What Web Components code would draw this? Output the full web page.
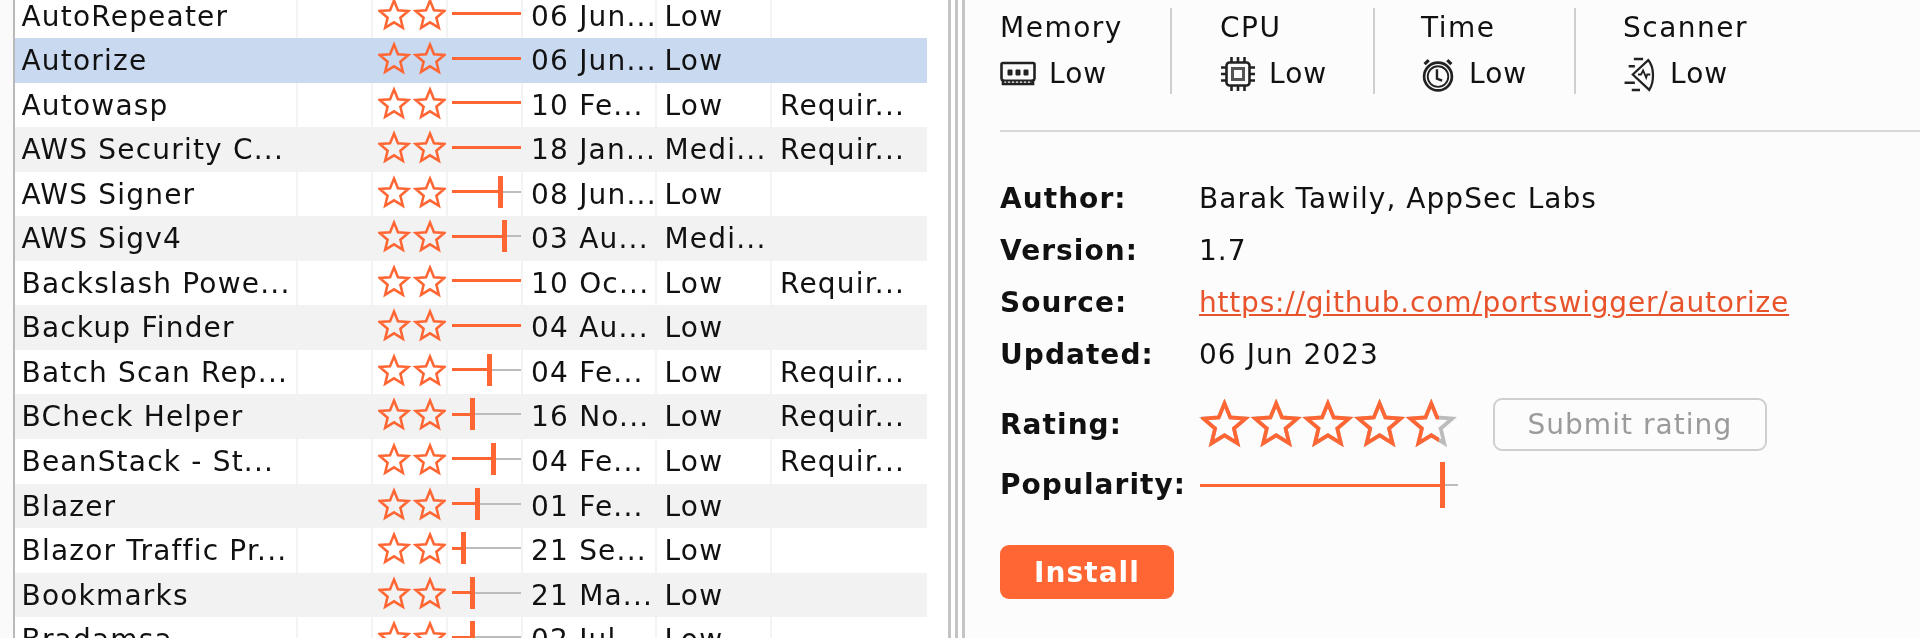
<!DOCTYPE html>
<html>
<head>
<meta charset="utf-8">
<title>BApp Store</title>
<style>
  html, body { margin: 0; height: 100%; overflow: hidden; background: #fff; }
  body { font: 28px/1.2 "DejaVu Sans", sans-serif; letter-spacing: 1.2px; color: #111; }
</style>
</head>
<body>
<bapp-store></bapp-store>

<script>
const ORANGE = '#ff6633';
const GREY = '#bcbcbc';

// builds the outline of a five pointed star, in a 100x100 box
function starPoints() {
  const pts = [];
  for (let i = 0; i < 10; i++) {
    const r = i % 2 ? 21 : 47;
    const a = -Math.PI / 2 + i * Math.PI / 5;
    pts.push((50 + r * Math.cos(a)).toFixed(1) + ',' + (52 + r * Math.sin(a)).toFixed(1));
  }
  return pts.join(' ');
}

let clipCount = 0;

/**
 * <star-rating count="2" size="32" step="36" stroke="9" value="238">
 * Row of outlined stars, orange up to value (px), grey after it.
 */
class StarRating extends HTMLElement {
  connectedCallback() {
    const count = +this.getAttribute('count') || 5;
    const size = +this.getAttribute('size') || 32;
    const step = +this.getAttribute('step') || size;
    const stroke = this.getAttribute('stroke') || 8;
    const width = step * (count - 1) + size;
    const value = this.hasAttribute('value') ? +this.getAttribute('value') : width;
    const scale = size / 100;
    const id = 'clip' + (clipCount++);
    const points = starPoints();
    let stars = '';
    for (let i = 0; i < count; i++) {
      stars += `<g transform="translate(${i * step} 0) scale(${scale})"><polygon points="${points}" stroke-width="${stroke}"/></g>`;
    }
    const root = this.attachShadow({ mode: 'open' });
    root.innerHTML = `
      <style>
        :host { display: block; width: ${width}px; height: ${size}px; }
        svg { display: block; overflow: visible; }
        g { fill: none; }
      </style>
      <svg width="${width}" height="${size}" viewBox="0 0 ${width} ${size}">
        <defs><clipPath id="${id}"><rect x="0" y="-2" width="${value}" height="${size + 4}"/></clipPath></defs>
        ${value < width ? `<g stroke="${GREY}">${stars}</g>` : ''}
        <g stroke="${ORANGE}" clip-path="url(#${id})">${stars}</g>
      </svg>`;
  }
}
customElements.define('star-rating', StarRating);

/**
 * <pop-bar value="48" thick="3" tick="32">
 * Popularity line: orange up to value (px), a tick there, grey after.
 */
class PopBar extends HTMLElement {
  connectedCallback() {
    const value = +this.getAttribute('value');
    const thick = +this.getAttribute('thick') || 3;
    const tick = +this.getAttribute('tick') || 32;
    const tickW = +this.getAttribute('tick-width') || 5;
    const full = this.hasAttribute('full');
    const root = this.attachShadow({ mode: 'open' });
    root.innerHTML = `
      <style>
        :host { display: flex; align-items: center; height: ${tick}px; }
        .on { width: ${value}px; height: ${thick}px; background: ${ORANGE}; }
        .tick { width: ${tickW}px; height: ${tick}px; background: ${ORANGE}; margin-left: -1px; }
        .off { flex: 1; height: 2px; background: ${GREY}; }
      </style>
      <div class="on"></div>
      ${full ? '' : '<div class="tick"></div><div class="off"></div>'}`;
  }
}
customElements.define('pop-bar', PopBar);

/**
 * <bapp-row name="" pop="" date="" cost="" pro="" stripe selected>
 * One row of the extension table.
 */
class BappRow extends HTMLElement {
  connectedCallback() {
    const a = n => this.getAttribute(n) || '';
    const pop = a('pop');
    const root = this.attachShadow({ mode: 'open' });
    root.innerHTML = `
      <style>
        :host {
          display: grid;
          grid-template-columns: 283px 75px 75px 75px 134px 115px 153px;
          height: 44.55px;
          background: #fff;
          --line: #f3f3f3;
        }
        :host([stripe]) { background: #f2f2f2; --line: #f2f2f2; }
        :host([selected]) { background: #c9d9f0; --line: #c9d9f0; }
        .cell {
          box-sizing: border-box;
          height: 100%;
          padding-left: 6.5px;
          line-height: 45px;
          white-space: nowrap;
          overflow: hidden;
          border-right: 2px solid var(--line);
        }
        .cell:last-child { border-right: 0; }
        .stars { padding: 5px 0 0 5px; }
        .pop { padding: 4px 0 0 4px; }
        .pop pop-bar { width: 72px; }
        .date { padding-left: 8px; }
        .cost { padding-left: 7.5px; }
        .pro { padding-left: 8px; }
      </style>
      <div class="cell">${a('name')}</div>
      <div class="cell"></div>
      <div class="cell stars"><star-rating count="2" size="32" step="36" stroke="8"></star-rating></div>
      <div class="cell pop"><pop-bar value="${pop || 72}" ${pop ? '' : 'full'}></pop-bar></div>
      <div class="cell date">${a('date')}</div>
      <div class="cell cost">${a('cost')}</div>
      <div class="cell pro">${a('pro')}</div>`;
  }
}
customElements.define('bapp-row', BappRow);

const ROWS = [
  ['AutoRepeater', '', '06 Jun...', 'Low', ''],
  ['Autorize', '', '06 Jun...', 'Low', ''],
  ['Autowasp', '', '10 Fe...', 'Low', 'Requir...'],
  ['AWS Security C...', '', '18 Jan...', 'Medi...', 'Requir...'],
  ['AWS Signer', 47, '08 Jun...', 'Low', ''],
  ['AWS Sigv4', 51, '03 Au...', 'Medi...', ''],
  ['Backslash Powe...', '', '10 Oc...', 'Low', 'Requir...'],
  ['Backup Finder', '', '04 Au...', 'Low', ''],
  ['Batch Scan Rep...', 36, '04 Fe...', 'Low', 'Requir...'],
  ['BCheck Helper', 19, '16 No...', 'Low', 'Requir...'],
  ['BeanStack - St...', 40, '04 Fe...', 'Low', 'Requir...'],
  ['Blazer', 24, '01 Fe...', 'Low', ''],
  ['Blazor Traffic Pr...', 10, '21 Se...', 'Low', ''],
  ['Bookmarks', 19, '21 Ma...', 'Low', ''],
  ['Bradamsa', 19, '02 Jul...', 'Low', '']
];

/** Left part: table of extensions, cut off by the window. */
class BappTable extends HTMLElement {
  connectedCallback() {
    const root = this.attachShadow({ mode: 'open' });
    root.innerHTML = `
      <style>
        :host {
          display: block;
          box-sizing: border-box;
          width: 948px;
          height: 638px;
          overflow: hidden;
          padding-left: 13px;
          background: linear-gradient(90deg, #fafafa 13px, #fff 13px);
        }
        .frame {
          margin-top: -6.5px;
          width: 912px;
          border-left: 2px solid #b9b9b9;
        }
      </style>
      <div class="frame"></div>`;
    const frame = root.querySelector('.frame');
    ROWS.forEach((r, i) => {
      const row = document.createElement('bapp-row');
      row.setAttribute('name', r[0]);
      if (r[1]) row.setAttribute('pop', r[1]);
      row.setAttribute('date', r[2]);
      row.setAttribute('cost', r[3]);
      row.setAttribute('pro', r[4]);
      if (i === 1) row.setAttribute('selected', '');
      else if (i % 2) row.setAttribute('stripe', '');
      frame.appendChild(row);
    });
  }
}
customElements.define('bapp-table', BappTable);

/** Triple grey bar between the two panes. */
class PaneSplit extends HTMLElement {
  constructor() {
    super();
    this.attachShadow({ mode: 'open' }).innerHTML = `
      <style>
        :host { display: flex; gap: 4px; width: 17px; height: 638px; flex: none; }
        i { width: 3px; background: #c4c4c4; }
      </style>
      <i></i><i></i><i></i>`;
  }
}
customElements.define('pane-split', PaneSplit);

/**
 * <resource-stat label="Memory" level="Low"><svg slot="icon">..</svg></resource-stat>
 */
class ResourceStat extends HTMLElement {
  connectedCallback() {
    const root = this.attachShadow({ mode: 'open' });
    root.innerHTML = `
      <style>
        :host { display: flex; flex-direction: column; justify-content: flex-start; }
        .label { height: 49px; line-height: 40px; letter-spacing: 1.5px; }
        .level { display: flex; align-items: center; height: 42px; }
        .icon { display: flex; width: var(--icon-w, 50px); flex: none; }
      </style>
      <div class="label">${this.getAttribute('label')}</div>
      <div class="level"><span class="icon"><slot name="icon"></slot></span><span>${this.getAttribute('level')}</span></div>`;
  }
}
customElements.define('resource-stat', ResourceStat);

/** <detail-row label="Author:">value</detail-row> */
class DetailRow extends HTMLElement {
  connectedCallback() {
    const root = this.attachShadow({ mode: 'open' });
    root.innerHTML = `
      <style>
        :host { display: flex; align-items: center; min-height: 52px; }
        .label { width: 199px; flex: none; font-weight: bold; }
      </style>
      <div class="label">${this.getAttribute('label')}</div>
      <slot></slot>`;
  }
}
customElements.define('detail-row', DetailRow);

/** <ui-button kind="primary">Install</ui-button> */
class UiButton extends HTMLElement {
  constructor() {
    super();
    this.attachShadow({ mode: 'open' }).innerHTML = `
      <style>
        :host {
          display: inline-flex;
          align-items: center;
          justify-content: center;
          box-sizing: border-box;
          border-radius: 9px;
        }
        :host([kind="primary"]) {
          width: 174px; height: 54px;
          background: ${ORANGE}; color: #fff; font-weight: bold;
        }
        :host([kind="disabled"]) {
          width: 274px; height: 53px;
          border: 2px solid #cfcfcf; color: #9b9b9b;
        }
      </style>
      <slot></slot>`;
  }
}
customElements.define('ui-button', UiButton);

/** Right part: details of the selected extension. */
class BappDetails extends HTMLElement {
  constructor() {
    super();
    this.attachShadow({ mode: 'open' }).innerHTML = `
      <style>
        :host {
          display: block;
          flex: 1;
          box-sizing: border-box;
          height: 638px;
          background: #fcfcfc;
          padding-left: 35px;
          overflow: hidden;
          letter-spacing: 1.05px;
        }
        .stats {
          display: flex;
          height: 130px;
          border-bottom: 2px solid #d8d8d8;
        }
        resource-stat { height: 86px; margin-top: 8px; }
        .s1 { width: 170px; }
        .s2 { width: 153px; padding-left: 48px; border-left: 2px solid #cfcfcf; }
        .s3 { width: 153px; padding-left: 46px; border-left: 2px solid #cfcfcf; }
        .s4 { padding-left: 47px; border-left: 2px solid #cfcfcf; }
        .info { padding-top: 41px; }
        a { color: #e8532b; text-decoration: underline; letter-spacing: 0.8px; }
        .rating { height: 58px; margin-top: 14.4px; }
        .pop { height: 62px; }
        .actions { margin-top: 30px; }
        star-rating { margin: 0 -2px 0 2px; }
        pop-bar { width: 258px; margin: 2px 0 0 1px; }
        svg { display: block; }
      </style>
      <div class="stats">
        <resource-stat class="s1" label="Memory" level="Low" style="--icon-w:49px">
          <svg slot="icon" width="36" height="26" viewBox="0 0 36 26" fill="none" stroke="#222" stroke-width="2.6">
            <path d="M3 2h30a1.5 1.5 0 0 1 1.500 1.500v14a2 2 0 0 1-1.500 2v3.500H3v-3.500a2 2 0 0 1-1.500-2v-14A1.500 1.500 0 0 1 3 2z"/>
            <path d="M3 19.500h30" stroke-width="2"/>
            <path d="M8 9h4v5H8zM16 9h4v5h-4zM24 9h4v5h-4z" fill="#222" stroke-width="1"/>
            <path d="M7 20v4M11 20v4M15 20v4M19 20v4M23 20v4M27 20v4M31 20v4" stroke-width="1.600"/>
          </svg>
        </resource-stat>
        <resource-stat class="s2" label="CPU" level="Low" style="--icon-w:49px">
          <svg slot="icon" width="36" height="36" viewBox="0 0 36 36" fill="none" stroke="#222" stroke-width="2.6">
            <rect x="6.500" y="6.500" width="23" height="23" rx="3"/>
            <rect x="12.500" y="12.500" width="11" height="11" stroke="#555" stroke-width="3"/>
            <path d="M11.500 1v5M18 1v5M24.500 1v5M11.500 30v5M18 30v5M24.500 30v5M1 11.500h5M1 18h5M1 24.500h5M30 11.500h5M30 18h5M30 24.500h5"/>
          </svg>
        </resource-stat>
        <resource-stat class="s3" label="Time" level="Low" style="--icon-w:48px">
          <svg slot="icon" width="34" height="35" viewBox="0 0 32 34" fill="none" stroke="#222" stroke-width="2.6">
            <circle cx="16" cy="19" r="13.500"/>
            <circle cx="16" cy="19" r="10" stroke-width="1.800"/>
            <path d="M15 12v9l5 2" stroke-width="2.400"/>
            <path d="M3 7l4-4M29 7l-4-4" stroke-width="3"/>
          </svg>
        </resource-stat>
        <resource-stat class="s4" label="Scanner" level="Low" style="--icon-w:47px">
          <svg slot="icon" width="34" height="35" viewBox="0 0 32 34" fill="none" stroke="#222" stroke-width="2.200">
            <path d="M9 17L24 3c6 7 6 21 1 29z"/>
            <path d="M14 17h3l2-4 3 7 1-3h3" stroke-width="1.800"/>
            <path d="M10 2h9M5 9h6M1 25h10M8 32h8" stroke-width="2.400"/>
          </svg>
        </resource-stat>
      </div>
      <div class="info">
        <detail-row label="Author:">Barak Tawily, AppSec Labs</detail-row>
        <detail-row label="Version:">1.7</detail-row>
        <detail-row label="Source:"><a>https://github.com/portswigger/autorize</a></detail-row>
        <detail-row label="Updated:">06 Jun 2023</detail-row>
        <detail-row class="rating" label="Rating:">
          <star-rating count="5" size="47" step="51.7" stroke="8" value="238"></star-rating>
          <ui-button kind="disabled" style="margin-left:40px">Submit rating</ui-button>
        </detail-row>
        <detail-row class="pop" label="Popularity:"><pop-bar value="241" thick="3" tick="46"></pop-bar></detail-row>
        <div class="actions"><ui-button kind="primary">Install</ui-button></div>
      </div>`;
  }
}
customElements.define('bapp-details', BappDetails);

/** Page shell: table, splitter, details. */
class BappStore extends HTMLElement {
  constructor() {
    super();
    this.attachShadow({ mode: 'open' }).innerHTML = `
      <style>
        :host { display: flex; width: 1920px; height: 638px; overflow: hidden; filter: blur(0.45px); }
      </style>
      <bapp-table></bapp-table>
      <pane-split></pane-split>
      <bapp-details></bapp-details>`;
  }
}
customElements.define('bapp-store', BappStore);
</script>
</body>
</html>
